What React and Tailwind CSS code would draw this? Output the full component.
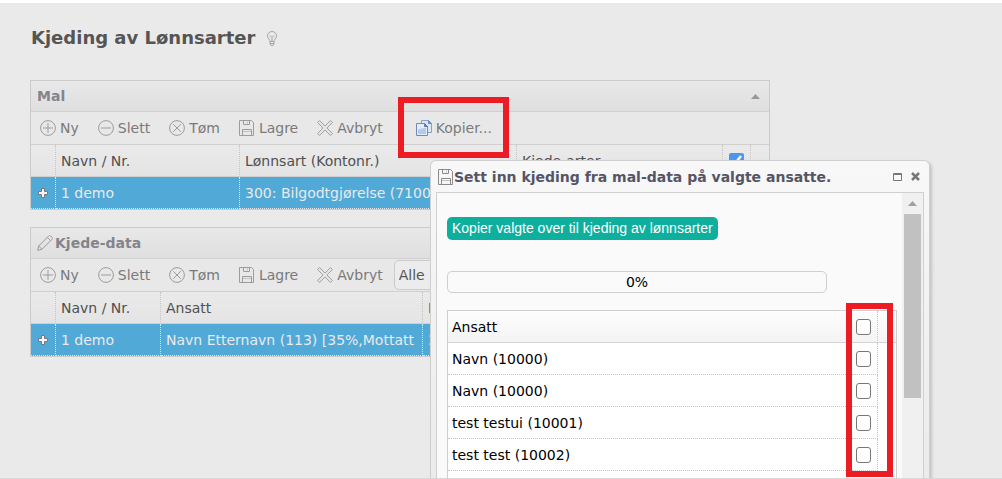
import { useState } from 'react';

const employees = [
  { id: 1, name: 'Navn (10000)' },
  { id: 2, name: 'Navn (10000)' },
  { id: 3, name: 'test testui (10001)' },
  { id: 4, name: 'test test (10002)' },
];

const Icon = ({ children }) => (
  <svg width="16" height="16" viewBox="0 0 16 16" fill="none" stroke="currentColor" className="shrink-0" aria-hidden="true">
    {children}
  </svg>
);

const AddIcon = () => (
  <Icon>
    <circle cx="8" cy="8" r="7.4" />
    <path d="M8 3v10M3 8h10" />
  </Icon>
);

const RemoveIcon = () => (
  <Icon>
    <circle cx="8" cy="8" r="7.4" />
    <path d="M3 8h10" />
  </Icon>
);

const ClearIcon = () => (
  <Icon>
    <circle cx="8" cy="8" r="7.4" />
    <path d="M4.2 4.2l7.6 7.6M11.8 4.2l-7.6 7.6" />
  </Icon>
);

const SaveIcon = () => (
  <Icon>
    <path d="M.5 .5h12l2 2v13H.5zM4.5 .5v4h6v-4M3.5 15.5v-6h9v6" />
    <path d="M8.5 1.500v2M4 11.500h8" strokeOpacity=".5" />
  </Icon>
);

const CancelIcon = () => (
  <Icon>
    <path d="M2.500 .6L8 6.100 13.500 .6l1.900 1.900L9.900 8l5.500 5.500-1.900 1.900L8 9.900l-5.500 5.500L.6 13.500 6.100 8 .6 2.500z" strokeLinejoin="round" />
  </Icon>
);

const PencilIcon = () => (
  <Icon>
    <path d="M.7 15.300l1-4.300L11.800 .9c.6-.5 1.200-.5 1.700 0l1.600 1.600c.5.5.5 1.100 0 1.700L5 14.300zM1.700 11l3.300 3.300M10.300 2.400l3.300 3.300" />
  </Icon>
);

const CopyIcon = () => (
  <svg width="16" height="16" viewBox="0 0 16 16" className="shrink-0" aria-hidden="true">
    <path d="M5.500 .5h7l3 3v9h-10z" fill="#dbe5f4" stroke="#8aa0ca" />
    <path d="M12.500 .5v3h3z" fill="#6f8abf" stroke="#6f8abf" />
    <path d="M.5 3.500h8l3 3v9H.5z" fill="#e4ecf7" stroke="#7289bd" />
    <path d="M2 9.500L10 7.500V14H2z" fill="#b4cbea" />
    <path d="M8.500 3.500v3h3z" fill="#5f7bb5" stroke="#5f7bb5" />
  </svg>
);

const BulbIcon = () => (
  <svg width="10" height="15" viewBox="0 0 10 15" fill="none" stroke="#a5a5a5" aria-hidden="true">
    <path d="M3 10.500C3 8.500.5 7.500.5 4.800.5 2.300 2.500.5 5 .5s4.500 1.800 4.500 4.300C9.500 7.500 7 8.500 7 10.500zM3 10.500v2.500l1 1.500h2l1-1.500v-2.500M3 12.500h4M3 4.500l2 2 2-2M5 6.500v4" />
  </svg>
);

const PlusMark = () => (
  <svg width="10" height="10" viewBox="0 0 10 10" aria-hidden="true">
    <path d="M3.500 .5h3v3h3v3h-3v3h-3v-3h-3v-3h3z" fill="#f5f5f5" stroke="#7b7878" />
  </svg>
);

function ToolButton({ icon, children }) {
  return (
    <button type="button" className="flex h-8 items-center gap-1 text-[#7a7a7a]">
      <span className="text-[#9c9c9c]">{icon}</span>
      {children}
    </button>
  );
}

function Toolbar({ children }) {
  return (
    <div className="flex h-[33px] items-center gap-[19px] border-b border-[#d0d0d0] bg-[#e8e8e8] px-[9px]">
      <ToolButton icon={<AddIcon />}>Ny</ToolButton>
      <ToolButton icon={<RemoveIcon />}>Slett</ToolButton>
      <ToolButton icon={<ClearIcon />}>Tøm</ToolButton>
      <ToolButton icon={<SaveIcon />}>Lagre</ToolButton>
      <ToolButton icon={<CancelIcon />}>Avbryt</ToolButton>
      {children}
    </div>
  );
}

function PanelHeader({ children }) {
  return (
    <div className="flex h-[31px] items-center border-b border-[#d0d0d0] bg-linear-to-b from-[#e8e8e8] to-[#dfdfdf] px-[6px] font-bold text-[#84848c]">
      {children}
    </div>
  );
}

function Grid({ widths, heads, cells }) {
  return (
    <table className="w-full table-fixed border-separate border-spacing-0 whitespace-nowrap text-left">
      <colgroup>
        {widths.map((w, i) => <col key={i} style={w ? { width: w } : undefined} />)}
      </colgroup>
      <thead className="bg-linear-to-b from-[#eaeaea] to-[#e4e4e4] text-[#505050]">
        <tr>
          {heads.map((head, i) => (
            <th key={i} className="h-8 overflow-hidden border-r border-b border-r-[#c4c4c4] border-b-[#d0d0d0] p-0 pl-[5px] font-normal [border-right-style:dotted] last:border-r-0">{head}</th>
          ))}
        </tr>
      </thead>
      <tbody className="bg-[#51a9d8] text-[#eaeaea]">
        <tr>
          {cells.map((cell, i) => (
            <td key={i} className="h-8 overflow-hidden border-r border-b border-dotted border-[#d8e6ee] p-0 pl-[5px] first:pl-[7px] last:border-r-0">{cell}</td>
          ))}
        </tr>
      </tbody>
    </table>
  );
}

function EmployeeDialog() {
  const [selected, setSelected] = useState([]);
  const all = selected.length === employees.length;

  const toggle = (id) => {
    setSelected(selected.includes(id) ? selected.filter(s => s !== id) : [...selected, id]);
  };

  const boxClass = 'block h-4 w-[15px] appearance-none rounded-[3px] border border-[#767676] bg-white checked:bg-[#0d6efd]';

  return (
    <section role="dialog" aria-labelledby="dialog-title"
      className="absolute top-[157px] bottom-0 left-[430px] flex w-[500px] flex-col rounded-t-md border border-b-0 border-[#cfcfcf] bg-linear-to-b from-[#f8f8f8] to-[#ebebeb] px-[5px] shadow-[2px_2px_3px_#c4c4c4]">
      <header className="flex h-[31px] shrink-0 items-center pl-[2px] text-[#8a8a8a]">
        <SaveIcon />
        <h2 id="dialog-title" className="flex-1 whitespace-nowrap text-sm font-bold text-[#555566]">Sett inn kjeding fra mal-data på valgte ansatte.</h2>
        <button type="button" aria-label="Maksimer" className="mr-[9px]">
          <svg width="9" height="8" viewBox="0 0 9 8" fill="none" stroke="#777">
            <path d="M.5 .5h8v7h-8zM0 1.500h9" />
          </svg>
        </button>
        <button type="button" aria-label="Lukk" className="mr-1">
          <svg width="9" height="9" viewBox="0 0 9 9" stroke="#777" strokeWidth="2.500">
            <path d="M1 1l7 7M8 1L1 8" />
          </svg>
        </button>
      </header>

      <div className="flex min-h-0 flex-1 overflow-hidden border border-b-0 border-[#cfcfcf] bg-[#fafafa]">
        <div className="flex flex-1 flex-col pt-6 pr-[5px] pl-[10px]">
          <button type="button" className="h-[23px] self-start rounded-[5px] bg-[#0eb09d] px-[5px] font-['Liberation_Sans',Arial,sans-serif] text-sm leading-[23px] text-white">
            Kopier valgte over til kjeding av lønnsarter
          </button>

          <div role="progressbar" aria-valuenow={0} className="mt-[31px] mr-[70px] flex h-[22px] shrink-0 items-center justify-center rounded-[5px] border border-[#cfcfcf]">
            0%
          </div>

          <div className="relative mt-[17px] flex-1 border border-b-0 border-[#cfcfcf] bg-white">
            <table className="w-full table-fixed border-separate border-spacing-0 text-left">
              <colgroup>
                <col />
                <col className="w-[26px]" />
                <col className="w-[18px]" />
              </colgroup>
              <thead className="bg-linear-to-b from-[#fdfdfd] to-[#f4f4f4]">
                <tr>
                  <th className="h-8 border-b border-[#d4d4d4] p-0 pl-1 font-normal">Ansatt</th>
                  <th className="border-r border-b border-[#d4d4d4] p-0 pl-1 [border-right-style:dotted] border-r-[#c4c4c4]">
                    <input type="checkbox" aria-label="Velg alle" className={boxClass} checked={all}
                      onChange={() => setSelected(all ? [] : employees.map(e => e.id))} />
                  </th>
                  <td className="border-b border-[#d4d4d4] p-0"></td>
                </tr>
              </thead>
              <tbody>
                {employees.map(emp => (
                  <tr key={emp.id}>
                    <td className="h-8 border-b border-dotted border-[#c4c4c4] p-0 pl-1">{emp.name}</td>
                    <td className="border-r border-b border-dotted border-[#c4c4c4] p-0 pl-1">
                      <input type="checkbox" aria-label={`Velg ${emp.name}`} className={boxClass}
                        checked={selected.includes(emp.id)} onChange={() => toggle(emp.id)} />
                    </td>
                    <td className="p-0"></td>
                  </tr>
                ))}
              </tbody>
            </table>
            <div className="pointer-events-none absolute -top-2 right-[3px] bottom-px w-[47px] border-6 border-[#ed1c24]"></div>
          </div>
        </div>

        {/* Scrollbar */}
        <div className="flex w-[21px] flex-col items-center bg-[#f0f0f0]">
          <div className="flex h-[21px] shrink-0 items-center">
            <svg width="9" height="5" viewBox="0 0 9 5" fill="#a0a0a0"><path d="M0 5L4.500 0 9 5z" /></svg>
          </div>
          <div className="h-[184px] w-[17px] shrink-0 bg-[#c1c1c1]"></div>
        </div>
      </div>
    </section>
  );
}

export default function App() {
  return (
    <div className="flex h-screen flex-col bg-white pt-[3px] font-['DejaVu_Sans',Verdana,sans-serif] text-sm leading-5 text-black">
      <main className="relative flex-1 overflow-hidden border-b border-[#d8d8d8] bg-[#eaeaea] pr-[30px] pl-[30px]">
        <div className="flex items-center gap-3 pt-[23px] pl-px">
          <h1 className="text-lg leading-6 font-bold text-[#555]">Kjeding av Lønnsarter</h1>
          <BulbIcon />
        </div>

        <section className="mt-[30px] max-w-[740px] border border-[#cbcbcb]">
          <PanelHeader>
            <h2 className="flex-1">Mal</h2>
            <button type="button" aria-label="Skjul" className="pr-[3px]">
              <svg width="9" height="5" viewBox="0 0 9 5" fill="#999"><path d="M0 5L4.500 0 9 5z" /></svg>
            </button>
          </PanelHeader>
          <Toolbar>
            <div className="relative ml-[14px]">
              <ToolButton icon={<CopyIcon />}>Kopier...</ToolButton>
              <div className="pointer-events-none absolute -top-[15px] -left-[18px] h-[61px] w-[111px] border-6 border-[#ed1c24]"></div>
            </div>
          </Toolbar>
          <Grid
            widths={[25, 184, 277, 206, 28, null]}
            heads={['', 'Navn / Nr.', 'Lønnsart (Kontonr.)', 'Kjede-arter',
              <input key="c" type="checkbox" defaultChecked aria-label="Kjede-arter" className="ml-px block h-[15px] w-[15px] accent-[#4f96ec]" />, '']}
            cells={[<PlusMark key="p" />, '1 demo', '300: Bilgodtgjørelse (7100)', '', '', '']}
          />
        </section>

        <section className="mt-[17px] max-w-[740px] border border-[#cbcbcb]">
          <PanelHeader>
            <span className="mr-[2px] text-[#9c9c9c]"><PencilIcon /></span>
            <h2>Kjede-data</h2>
          </PanelHeader>
          <Toolbar>
            <select aria-label="Filter" className="-ml-2 h-[30px] w-24 appearance-none rounded-[5px] border border-[#cbcbcb] bg-[#ececec] px-1 text-[#555]">
              <option>Alle</option>
            </select>
          </Toolbar>
          <Grid
            widths={[25, 105, 262, null]}
            heads={['', 'Navn / Nr.', 'Ansatt', 'Lønn']}
            cells={[<PlusMark key="p" />, '1 demo', 'Navn Etternavn (113) [35%,Mottatt', '30']}
          />
        </section>

        <EmployeeDialog />
      </main>
    </div>
  );
}
